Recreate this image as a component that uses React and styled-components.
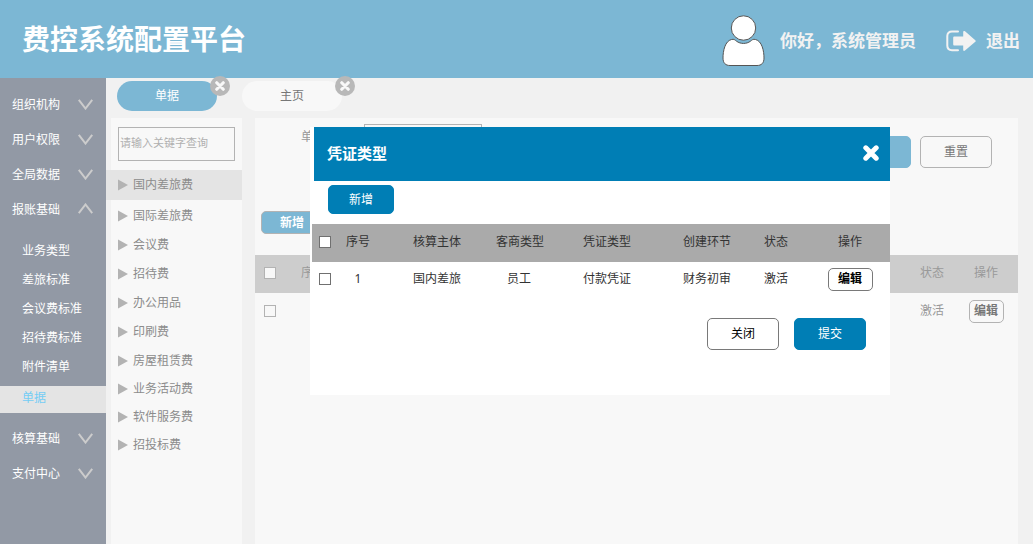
import React from 'react';
import styled, { createGlobalStyle } from 'styled-components';

const GlobalStyle = createGlobalStyle`
  * {
    box-sizing: border-box;
  }

  body {
    margin: 0;
    background: #f1f1f1;
    font-family: "Noto Sans", "Noto Sans CJK SC", sans-serif;
    font-size: 12px;
    line-height: 18px;
    color: #333;
  }

  button, input {
    font-family: inherit;
    font-size: 12px;
    margin: 0;
  }

  ul {
    list-style: none;
    margin: 0;
    padding: 0;
  }
`;

const Page = styled.div`
  position: relative;
  display: flex;
  flex-direction: column;
  min-height: 100vh;
`;

const Header = styled.header`
  display: flex;
  align-items: center;
  height: 78px;
  padding: 0 13px 0 22px;
  background: #7cb7d4;
  color: #fff;
`;

const Title = styled.h1`
  flex: 1;
  margin: 0;
  font-size: 28px;
  line-height: 40px;
  font-weight: 700;
`;

const User = styled.div`
  display: flex;
  align-items: center;
  gap: 15px;
  padding-top: 4px;
  font-size: 17px;
  font-weight: 700;
  color: #f2f2f2;
`;

const Logout = styled.a`
  display: flex;
  align-items: center;
  gap: 10px;
  margin-left: 30px;
  padding-top: 4px;
  font-size: 17px;
  font-weight: 700;
  color: #f2f2f2;
  text-decoration: none;
`;

const Body = styled.div`
  display: flex;
  flex: 1;
`;

const Sidebar = styled.nav`
  width: 106px;
  padding-top: 8px;
  background: #9299a5;
`;

const MenuButton = styled.button`
  display: flex;
  align-items: center;
  justify-content: space-between;
  width: 100%;
  height: 35px;
  padding: 0 12px;
  border: none;
  background: none;
  color: #fff;
  cursor: pointer;
`;

const SubMenu = styled.ul`
  padding: 11px 0 7px;
`;

const SubLink = styled.a`
  display: block;
  height: ${props => (props.$active ? '27px' : '29px')};
  margin-top: ${props => (props.$active ? '4px' : '0')};
  padding-left: 22px;
  line-height: ${props => (props.$active ? '24px' : '28px')};
  background: ${props => (props.$active ? '#e4e4e4' : 'none')};
  color: ${props => (props.$active ? '#74cdf5' : '#fff')};
  text-decoration: none;
`;

const Content = styled.div`
  display: flex;
  flex: 1;
  flex-direction: column;
  padding: 0 15px 0 5px;
`;

const Tabs = styled.div`
  display: flex;
  gap: 25px;
  height: 40px;
  padding: 3px 6px 7px;
`;

const TabItem = styled.div`
  position: relative;
  width: 100px;
`;

const Tab = styled.button`
  width: 100%;
  height: 30px;
  padding: 0 0 3px;
  border: none;
  border-radius: 15px;
  background: ${props => (props.$active ? '#7cb7d4' : '#f8f8f8')};
  color: ${props => (props.$active ? '#fff' : '#777')};
  cursor: pointer;
`;

const TabClose = styled.button`
  position: absolute;
  top: -5px;
  right: -13px;
  display: flex;
  align-items: center;
  justify-content: center;
  width: 20px;
  height: 20px;
  padding: 0;
  border: none;
  border-radius: 50%;
  background: #b8b8b8;
  color: #f8f8f8;
  cursor: pointer;
`;

const Columns = styled.div`
  display: flex;
  flex: 1;
  gap: 13px;
`;

const Tree = styled.aside`
  width: 131px;
  background: #f8f8f8;
`;

const TreeSearch = styled.input`
  display: block;
  width: 117px;
  height: 34px;
  margin: 9px 7px;
  padding: 0 1px 4px;
  border: 1px solid #b3b3b3;
  border-radius: 0;
  background: #f8f8f8;

  &::placeholder {
    font-size: 11px;
    color: #b0b0b0;
    opacity: 1;
  }
`;

const TreeItem = styled.li`
  height: 29px;

  &:first-child {
    height: 30px;
    margin: 0 0 1px -5px;
    padding-left: 5px;
    background: #e4e4e4;
  }

  &:nth-child(n + 8) {
    height: 28px;
  }
`;

const TreeLink = styled.a`
  display: flex;
  align-items: center;
  gap: 5px;
  height: 100%;
  padding-left: 7px;
  color: #8c8c8c;
  text-decoration: none;
`;

const Panel = styled.main`
  flex: 1;
  min-width: 0;
  padding-top: 6px;
  background: #f8f8f8;
`;

const Filter = styled.form`
  display: flex;
  align-items: flex-start;
  height: 44px;
  padding: 0 26px 0 46px;
`;

const FilterLabel = styled.label`
  width: 63px;
  line-height: 26px;
  color: #999;
`;

const FilterInput = styled.input`
  width: 118px;
  height: 34px;
  border: 1px solid #b3b3b3;
  background: #f8f8f8;
`;

const FilterButtons = styled.div`
  display: flex;
  gap: 9px;
  margin: 12px 0 0 auto;
`;

const Button = styled.button`
  width: 72px;
  height: 32px;
  padding: 0 0 2px;
  border: 1px solid ${props => (props.$primary ? '#007eb5' : '#797979')};
  border-radius: 5px;
  background: ${props => (props.$primary ? '#007eb5' : '#fff')};
  color: ${props => (props.$primary ? '#fff' : '#000')};
  cursor: pointer;
`;

const MutedButton = styled(Button)`
  border-color: ${props => (props.$primary ? '#7cb7d4' : '#b3b3b3')};
  background: ${props => (props.$primary ? '#7cb7d4' : '#f8f8f8')};
  color: ${props => (props.$primary ? '#fff' : '#777')};
`;

const AddMuted = styled(MutedButton)`
  display: block;
  width: 62px;
  height: 23px;
  margin: 43px 0 21px 6px;
  border-color: #b3b3b3;
  font-weight: 700;
`;

const AddButton = styled(Button)`
  width: 66px;
  height: 29px;
`;

const EditButton = styled(Button)`
  width: 45px;
  height: 23px;
  font-weight: 700;
`;

const EditMuted = styled(MutedButton)`
  width: 35px;
  height: 23px;
  font-weight: 700;
`;

const Table = styled.table`
  width: 100%;
  table-layout: fixed;
  border-collapse: collapse;
  color: ${props => (props.$muted ? '#999' : '#333')};

  th, td {
    padding: 0;
    font-weight: 400;
    text-align: center;
    white-space: nowrap;
  }

  th {
    height: 38px;
    padding-bottom: 2px;
    background: ${props => (props.$muted ? '#cdcdcd' : '#aaa')};
  }

  td {
    height: ${props => (props.$muted ? '36px' : '34px')};
  }
`;

const Col = styled.col`
  width: ${props => (props.$width ? `${props.$width}px` : 'auto')};
`;

const Checkbox = styled.input`
  display: block;
  width: 12px;
  height: 12px;
  margin: 0 auto;
  appearance: none;
  border: 1px solid ${props => (props.$muted ? '#b3b3b3' : '#707070')};
  background: ${props => (props.$muted ? '#f8f8f8' : '#fff')};

  &:checked {
    background: #007eb5;
  }
`;

const Modal = styled.section`
  position: absolute;
  top: 127px;
  left: 310px;
  width: 580px;
  background: #fff;
`;

const ModalHeader = styled.div`
  display: flex;
  align-items: center;
  justify-content: space-between;
  height: 54px;
  margin-left: 4px;
  padding: 0 11px 3px 13px;
  background: #007eb5;
  color: #fff;
`;

const ModalTitle = styled.h2`
  margin: 0;
  font-size: 15px;
  font-weight: 700;
`;

const ModalClose = styled.button`
  display: flex;
  padding: 0;
  border: none;
  background: none;
  color: #fff;
  cursor: pointer;
`;

const ModalTools = styled.div`
  display: flex;
  padding: 4px 18px 10px;
`;

const ModalTable = styled.div`
  padding-left: 2px;
`;

const ModalFooter = styled.div`
  display: flex;
  justify-content: flex-end;
  gap: 15px;
  padding: 22px 24px 45px;
`;

const UserIcon = () => (
  <svg width="43" height="52" viewBox="0 0 43 52" fill="#fff" stroke="#555" strokeWidth="1" aria-hidden="true">
    <path d="M9.500 24.500 C3 26 1 36 1 43 C1 48 3.500 50.500 8 50.500 H35 C39.500 50.500 42 48 42 43 C42 36 40 26 33.500 24.500 C31 23.800 30 25 28.500 26.200 C24.500 29.200 18.500 29.200 14.500 26.200 C13 25 12 23.800 9.500 24.500 Z" />
    <circle cx="21.500" cy="13" r="12.200" />
  </svg>
);

const LogoutIcon = () => (
  <svg width="30" height="22" viewBox="0 0 30 22" aria-hidden="true">
    <path d="M12 1.500 H6 C3 1.500 1.300 3.200 1.300 6 V15.500 C1.300 18.500 3 20.200 6 20.200 H12" fill="none" stroke="#f2f2f2" strokeWidth="2" strokeLinecap="round" />
    <path d="M8.500 6.500 H17.200 V1.800 C17.200 0.800 18.200 0.600 19 1.300 L29.300 10.200 C29.900 10.700 29.900 11.200 29.300 11.700 L19 20.600 C18.200 21.200 17.200 21 17.200 20 V15.500 H8.500 C7.700 15.500 7.200 15 7.200 14.200 V7.800 C7.200 7 7.700 6.500 8.500 6.500 Z" fill="#f2f2f2" />
  </svg>
);

const Chevron = ({ up }) => (
  <svg width="16" height="12" viewBox="0 0 16 12" fill="none" stroke="#ccc" strokeWidth="2" aria-hidden="true">
    <path d={up ? 'M0.800 10.200 L7.500 1.500 L14.200 10.200' : 'M0.800 1.800 L7.500 10.500 L14.200 1.800'} />
  </svg>
);

const Arrow = () => (
  <svg width="10" height="12" viewBox="0 0 10 12" fill="#b3b3b3" aria-hidden="true">
    <path d="M0 0.500 L10 6 L0 11.500 Z" />
  </svg>
);

const Cross = ({ size }) => (
  <svg width={size} height={size} viewBox="0 0 16 16" stroke="currentColor" strokeWidth="5" aria-hidden="true">
    <path d="M2.800 2.800 L13.200 13.200 M13.200 2.800 L2.800 13.200" strokeLinecap="round" />
  </svg>
);

const menu = [
  { name: '组织机构' },
  { name: '用户权限' },
  { name: '全局数据' },
  { name: '报账基础', children: ['业务类型', '差旅标准', '会议费标准', '招待费标准', '附件清单', '单据'] },
  { name: '核算基础' },
  { name: '支付中心' },
];

const tree = [
  '国内差旅费', '国际差旅费', '会议费', '招待费', '办公用品',
  '印刷费', '房屋租赁费', '业务活动费', '软件服务费', '招投标费',
];

const voucherCols = [
  ['序号', 40], ['核算主体', 118], ['客商类型', 46], ['凭证类型', 130],
  ['创建环节', 70], ['状态', 68], ['操作', 80],
];

const vouchers = [['1', '国内差旅', '员工', '付款凭证', '财务初审', '激活']];

const SideMenu = () => (
  <Sidebar>
    {menu.map(item => (
      <div key={item.name}>
        <MenuButton type="button">
          {item.name}
          <Chevron up={!!item.children} />
        </MenuButton>
        {item.children && (
          <SubMenu>
            {item.children.map(name => (
              <li key={name}>
                <SubLink href="#" $active={name === '单据'}>{name}</SubLink>
              </li>
            ))}
          </SubMenu>
        )}
      </div>
    ))}
  </Sidebar>
);

const BillPanel = () => (
  <Panel>
    <Filter>
      <FilterLabel htmlFor="bill">单据</FilterLabel>
      <FilterInput id="bill" type="text" />
      <FilterButtons>
        <MutedButton type="button" $primary aria-label="查询" />
        <MutedButton type="reset">重置</MutedButton>
      </FilterButtons>
    </Filter>
    <AddMuted type="button" $primary>新增</AddMuted>
    <Table $muted>
      <colgroup>
        <Col $width={30} />
        <Col $width={56} />
        <Col />
        <Col $width={44} />
        <Col $width={64} />
      </colgroup>
      <thead>
        <tr>
          <th><Checkbox type="checkbox" aria-label="全选" $muted /></th>
          <th>序号</th>
          <th />
          <th>状态</th>
          <th>操作</th>
        </tr>
      </thead>
      <tbody>
        <tr>
          <td><Checkbox type="checkbox" aria-label="选择" $muted /></td>
          <td />
          <td />
          <td>激活</td>
          <td><EditMuted type="button">编辑</EditMuted></td>
        </tr>
      </tbody>
    </Table>
  </Panel>
);

const VoucherModal = () => (
  <Modal role="dialog" aria-labelledby="voucher-title">
    <ModalHeader>
      <ModalTitle id="voucher-title">凭证类型</ModalTitle>
      <ModalClose type="button" aria-label="关闭"><Cross size={16} /></ModalClose>
    </ModalHeader>
    <ModalTools>
      <AddButton type="button" $primary>新增</AddButton>
    </ModalTools>
    <ModalTable>
      <Table>
        <colgroup>
          <Col $width={26} />
          {voucherCols.map(([name, width]) => <Col key={name} $width={width} />)}
        </colgroup>
        <thead>
          <tr>
            <th><Checkbox type="checkbox" aria-label="全选" /></th>
            {voucherCols.map(([name]) => <th key={name}>{name}</th>)}
          </tr>
        </thead>
        <tbody>
          {vouchers.map(row => (
            <tr key={row[0]}>
              <td><Checkbox type="checkbox" aria-label="选择" /></td>
              {row.map(value => <td key={value}>{value}</td>)}
              <td><EditButton type="button">编辑</EditButton></td>
            </tr>
          ))}
        </tbody>
      </Table>
    </ModalTable>
    <ModalFooter>
      <Button type="button">关闭</Button>
      <Button type="button" $primary>提交</Button>
    </ModalFooter>
  </Modal>
);

class App extends React.Component {
  render() {
    return (
      <Page>
        <GlobalStyle />
        <Header>
          <Title>费控系统配置平台</Title>
          <User>
            <UserIcon />
            你好，系统管理员
          </User>
          <Logout href="#">
            <LogoutIcon />
            退出
          </Logout>
        </Header>
        <Body>
          <SideMenu />
          <Content>
            <Tabs>
              <TabItem>
                <Tab type="button" $active>单据</Tab>
                <TabClose type="button" aria-label="关闭单据"><Cross size={10} /></TabClose>
              </TabItem>
              <TabItem>
                <Tab type="button">主页</Tab>
                <TabClose type="button" aria-label="关闭主页"><Cross size={10} /></TabClose>
              </TabItem>
            </Tabs>
            <Columns>
              <Tree>
                <TreeSearch type="text" placeholder="请输入关键字查询" aria-label="请输入关键字查询" />
                <ul>
                  {tree.map(name => (
                    <TreeItem key={name}>
                      <TreeLink href="#"><Arrow />{name}</TreeLink>
                    </TreeItem>
                  ))}
                </ul>
              </Tree>
              <BillPanel />
            </Columns>
          </Content>
        </Body>
        <VoucherModal />
      </Page>
    );
  }
}

export default App;
